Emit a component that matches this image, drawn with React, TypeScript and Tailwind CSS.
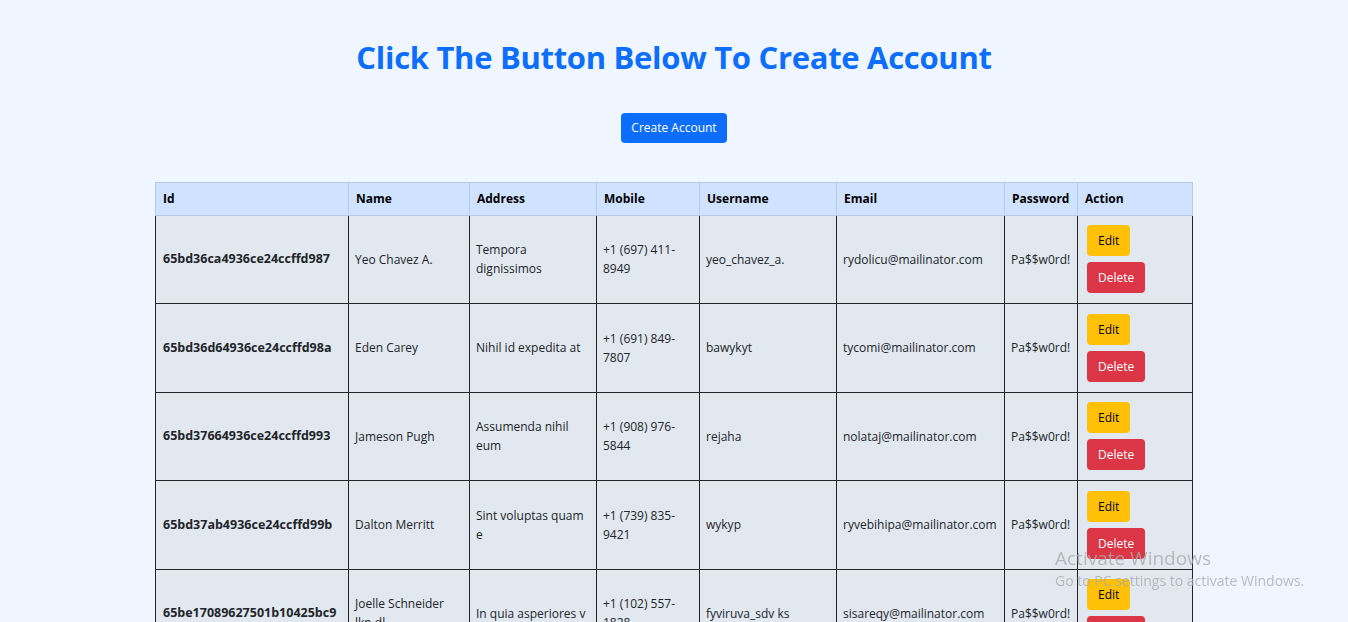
const users = [
  {
    id: "65bd36ca4936ce24ccffd987",
    name: "Yeo Chavez A.",
    address: "Tempora dignissimos",
    mobile: "+1 (697) 411-8949",
    username: "yeo_chavez_a.",
    email: "rydolicu@mailinator.com",
  },
  {
    id: "65bd36d64936ce24ccffd98a",
    name: "Eden Carey",
    address: "Nihil id expedita at",
    mobile: "+1 (691) 849-7807",
    username: "bawykyt",
    email: "tycomi@mailinator.com",
  },
  {
    id: "65bd37664936ce24ccffd993",
    name: "Jameson Pugh",
    address: "Assumenda nihil eum",
    mobile: "+1 (908) 976-5844",
    username: "rejaha",
    email: "nolataj@mailinator.com",
  },
  {
    id: "65bd37ab4936ce24ccffd99b",
    name: "Dalton Merritt",
    address: "Sint voluptas quam e",
    mobile: "+1 (739) 835-9421",
    username: "wykyp",
    email: "ryvebihipa@mailinator.com",
  },
  {
    id: "65be17089627501b10425bc9",
    name: "Joelle Schneider lkp dl",
    address: "In quia asperiores v",
    mobile: "+1 (102) 557-1828",
    username: "fyviruva_sdv ks",
    email: "sisareqy@mailinator.com",
  },
];

const headers = ["Id", "Name", "Address", "Mobile", "Username", "Email", "Password", "Action"];

export default function App() {
  return (
    <div
      className="min-h-screen bg-[#eff6ff] text-[#212529] pb-10"
      style={{ fontFamily: '"Open Sans", "Noto Sans", sans-serif' }}
    >
      <h1 className="pt-[34px] text-center text-[31px] font-bold text-[#0d6efd] tracking-[-0.3px]">
        Click The Button Below To Create Account
      </h1>

      <div className="flex justify-center mt-[32px]">
        <button className="h-[30px] px-[10px] rounded-[4px] bg-[#0d6efd] text-white text-[12px]">
          Create Account
        </button>
      </div>

      <table className="mx-auto mt-[39px] w-[1037px] table-fixed border-collapse text-[12px] leading-[1.6]">
        <colgroup>
          <col className="w-[193px]" />
          <col className="w-[121px]" />
          <col className="w-[127px]" />
          <col className="w-[103px]" />
          <col className="w-[137px]" />
          <col className="w-[168px]" />
          <col className="w-[73px]" />
          <col className="w-[115px]" />
        </colgroup>
        <thead>
          <tr className="bg-[#cfe2ff]">
            {headers.map((h) => (
              <th
                key={h}
                className="h-[33px] border border-[#b6c9e8] px-[7px] text-left font-bold text-black"
              >
                {h}
              </th>
            ))}
          </tr>
        </thead>
        <tbody>
          {users.map((u) => (
            <tr key={u.id} className="bg-[#e2e8f0]">
              <td className="h-[88.5px] border border-[#212529] px-[7px] font-bold text-[12.5px]">{u.id}</td>
              <td className="border border-[#212529] px-[6px]">{u.name}</td>
              <td className="border border-[#212529] px-[6px]">{u.address}</td>
              <td className="border border-[#212529] px-[6px]">{u.mobile}</td>
              <td className="border border-[#212529] px-[6px]">{u.username}</td>
              <td className="border border-[#212529] px-[6px]">{u.email}</td>
              <td className="border border-[#212529] px-[6px] whitespace-nowrap">Pa$$w0rd!</td>
              <td className="border border-[#212529] px-[9px]">
                <div className="flex flex-col items-start gap-[6px]">
                  <button className="h-[31px] px-[11px] rounded-[4px] bg-[#ffc107] text-black text-[12px]">
                    Edit
                  </button>
                  <button className="h-[31px] px-[11px] rounded-[4px] bg-[#dc3545] text-white text-[12px]">
                    Delete
                  </button>
                </div>
              </td>
            </tr>
          ))}
        </tbody>
      </table>

      {/* windows watermark */}
      <div className="fixed left-[1055px] top-[545px] pointer-events-none text-[#a9acaf]/80">
        <div className="text-[19px] leading-[26px]">Activate Windows</div>
        <div className="text-[14px] leading-[20px]">Go to PC settings to activate Windows.</div>
      </div>
    </div>
  );
}
